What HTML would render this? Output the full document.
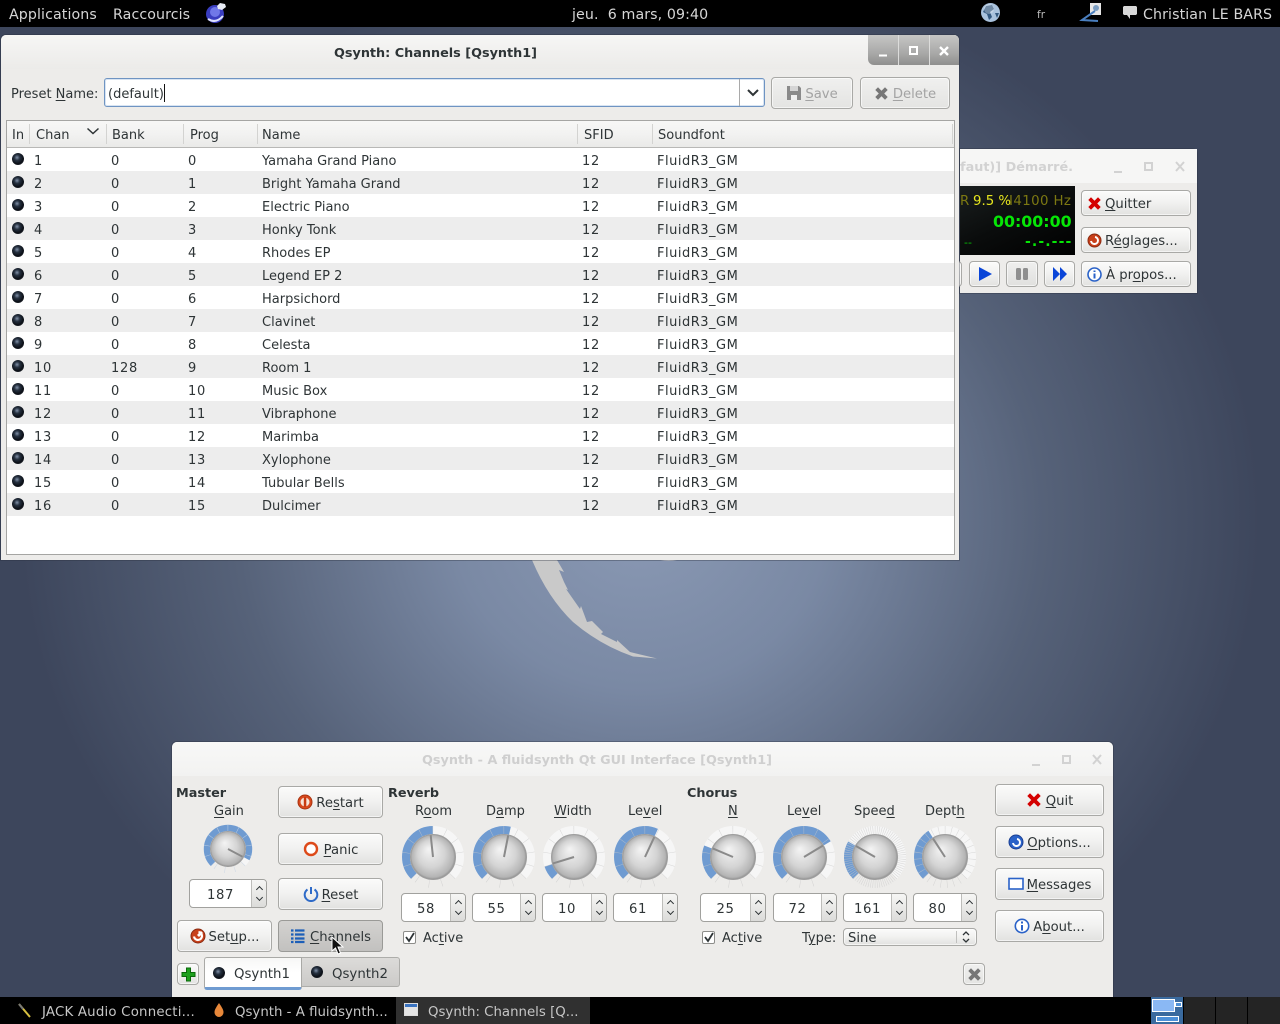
<!DOCTYPE html>
<html lang="fr"><head><meta charset="utf-8"><title>Qsynth</title>
<style>
html,body{margin:0;padding:0}
body{position:relative;width:1280px;height:1024px;overflow:hidden;font-family:"DejaVu Sans",sans-serif;font-size:13px;color:#2e3436;
background:radial-gradient(ellipse 620px 560px at 640px 520px,#8a99b4 0%,#7a89a4 30%,#566279 65%,#3d465c 100%);background-color:#3a4358}
.a,.t,.b,svg.k{position:absolute}
.t{white-space:nowrap;line-height:16px;margin-top:2px}
.bd{font-weight:bold;font-size:12.8px}
.c{transform:translateX(-50%)}
.bar{position:absolute;left:0;width:1280px;background:#000;color:#d6d6d6}
.win{position:absolute;background:#edecea;box-shadow:0 0 0 1px rgba(40,45,60,.35);border-radius:5px 5px 0 0}
.b{box-sizing:border-box;border:1px solid #a9a9a6;border-radius:4px;background:linear-gradient(#fbfbfa,#f2f2f1 45%,#e2e2e0);box-shadow:inset 0 0 0 1px rgba(255,255,255,.6);display:flex;align-items:center;justify-content:center;white-space:nowrap;gap:3px;font-size:13.2px}
.b svg{flex:none}
.b span{position:relative;top:1px}
.dis{color:#a3a3a3;background:linear-gradient(#f0f0ef,#e4e4e2)}
.pr{background:linear-gradient(#d3d2d0,#c2c1bf);border-color:#9a9a97;box-shadow:none}
.sp{position:absolute;box-sizing:border-box;height:29px;border:1px solid #a1a19e;border-radius:4px;background:#fff;text-align:center;line-height:31px;padding-right:15px;letter-spacing:.6px;font-size:13.2px}
.sp i{position:absolute;right:0;top:0;bottom:0;width:14px;border-left:1px solid #bdbdba;background:linear-gradient(#f6f6f5,#dcdcda);border-radius:0 3px 3px 0}
.sp i:before,.sp i:after{content:"";position:absolute;left:5px;width:4px;height:4px;border-left:1.3px solid #2e3436;border-top:1.3px solid #2e3436}
.sp i:before{top:7px;transform:rotate(45deg)}
.sp i:after{bottom:7px;transform:rotate(225deg)}
table{position:absolute;left:7px;top:148px;width:947px;border-collapse:collapse;table-layout:fixed;background:#fff}
td{height:19px;padding:4px 0 0 5px;line-height:19px;white-space:nowrap;overflow:hidden}
td:nth-child(-n+4),td:nth-child(6){letter-spacing:.7px}
td:last-child{letter-spacing:.5px}
tr:nth-child(even){background:#ededed}
.led{display:block;width:12px;height:12px;border-radius:50%;background:radial-gradient(circle at 42% 38%,#8090a8 0%,#25303f 28%,#0b0f16 62%,#40454c 100%);margin:-5px 0 0 0}
.hd{position:absolute;top:124px;height:20px;width:1px;background:#d3d3d1}
.cb{position:absolute;box-sizing:border-box;width:13px;height:13px;border:1px solid #8d8d8a;background:#fff;border-radius:2px}
u{text-underline-offset:2px;text-decoration-thickness:1px}
</style></head><body>
<svg width="0" height="0" style="position:absolute"><defs>
<radialGradient id="kg" cx="50%" cy="50%" r="50%" fx="40%" fy="32%"><stop offset="0" stop-color="#f4f4f4"/><stop offset=".6" stop-color="#d4d4d4"/><stop offset=".92" stop-color="#b4b4b4"/><stop offset="1" stop-color="#8f8f8f"/></radialGradient>
<g id="kb"><circle r="27" fill="none" stroke="#f6f6f6" stroke-width="8" pathLength="360" stroke-dasharray="270 360" transform="rotate(-225)"/></g>
<g id="kc"><circle r="22.6" fill="url(#kg)" stroke="#a0a0a0" stroke-width=".8"/></g>
</defs></svg>

<!-- wallpaper crescent -->
<svg class="a" style="left:0;top:0" width="1280" height="1024"><path fill="#c9c9c9" d="M532 560L557 560L564 572L559 570L564 582L568 590L566 589L580 609L581 606L587 622L592 621L603 632L601 634L617 642L617 640L630 652L657 658.5L633 656.5Q600 645 573 622Q548 598 532 560Z"/><path fill="#d8dbe2" d="M660 560h17q-8 2-17 0z"/></svg>

<!-- top bar -->
<div class="bar" style="top:0;height:27px;font-size:14.2px;letter-spacing:.1px">
<span class="t" style="left:9px;top:5px">Applications</span>
<span class="t" style="left:113px;top:5px">Raccourcis</span>
<span class="t" style="left:572px;top:5px;white-space:pre">jeu.  6 mars, 09:40</span>
<span class="t" style="left:1037px;top:5px;font-size:10.5px;color:#bbb">fr</span>
<span class="t" style="left:1143px;top:5px">Christian LE BARS</span>
<svg class="a" style="left:204px;top:0" width="24" height="24"><circle cx="11" cy="14" r="9" fill="#3a3ec0"/><circle cx="11" cy="12" r="5" fill="#7078e8"/><path d="M4 19q8 5 15-3" stroke="#dfe3ff" stroke-width="2" fill="none"/><path d="M13 6l3-3 5 1 1 3-4 3-4-1z" fill="#e8ecf4"/></svg>
<svg class="a" style="left:979px;top:1px" width="24" height="24"><circle cx="11.5" cy="11.5" r="9.5" fill="#a9c2dd"/><path d="M7 5l6-1 2 4-4 3 2 5-3 3-2-6-4-2z" fill="#33587f"/><path d="M16 12l4 0-2 5z" fill="#33587f"/><circle cx="10" cy="8" r="5" fill="#fff" opacity=".3"/></svg>
<svg class="a" style="left:1078px;top:0" width="24" height="24"><path d="M12 3h11v12H12z" fill="#e6e6e6"/><circle cx="18" cy="8" r="3" fill="#7a9cc0"/><path d="M17 11L4 20l16 1" stroke="#4a7fbf" stroke-width="2" fill="none"/></svg>
<svg class="a" style="left:1122px;top:5px" width="16" height="16"><path d="M2 1h12l1 1v7l-1 1H8v4L5 10H2L1 9V2z" fill="#d8d8d8"/></svg>
</div>

<!-- background small window -->
<div class="win" style="left:960px;top:149px;width:237px;height:144px;border-radius:0 5px 0 0">
<div class="a" style="left:0;top:0;width:237px;height:34px;background:#f6f6f5"></div>
<span class="t bd" style="left:0;top:9px;color:#d2d2d2">faut)] Démarré.</span>
<svg class="a" style="left:150px;top:8px" width="80" height="20" stroke="#d2d2d2" fill="none" stroke-width="2"><path d="M4 15h8"/><rect x="35" y="6" width="7" height="7"/><path d="M66 5l8 9M74 5l-8 9"/></svg>
<div class="a" style="left:0;top:37px;width:115px;height:69px;background:linear-gradient(155deg,#1a1f1f,#0a0c0c 50%,#000)"></div>
<span class="t" style="left:0;top:43px;color:#7c7812;font-size:13.33px">R</span>
<span class="t" style="left:13px;top:43px;color:#e6e61e;font-size:13.33px">9.5 %</span>
<span class="t" style="left:49px;top:43px;color:#7c7812;font-size:13.33px;letter-spacing:.4px">I4100 Hz</span>
<span class="t" style="left:33px;top:63px;color:#06e606;font-size:15.8px;font-weight:bold">00:00:00</span>
<span class="t" style="left:4px;top:84px;color:#06c006;font-size:11px">--</span>
<span class="t" style="left:65px;top:83px;color:#06e606;font-size:14px;font-weight:bold;letter-spacing:1.1px">-.-.---</span>
<div class="b" style="left:-8px;top:112px;width:10px;height:26px"></div>
<div class="b" style="left:9px;top:112px;width:31px;height:26px"><svg width="16" height="16"><path d="M2 1l13 7-13 7z" fill="#0a45d8"/></svg></div>
<div class="b" style="left:46px;top:112px;width:32px;height:26px;background:linear-gradient(#efefee,#e0e0de)"><svg width="14" height="14"><rect x="1" y="1" width="5" height="12" rx="1.5" fill="#8f8f8f"/><rect x="8" y="1" width="5" height="12" rx="1.5" fill="#8f8f8f"/></svg></div>
<div class="b" style="left:84px;top:112px;width:31px;height:26px"><svg width="16" height="14"><path d="M1 0l7 7-7 7zM8 0l7 7-7 7z" fill="#0a45d8"/></svg></div>
<div class="b" style="left:121px;top:41px;width:110px;height:26px;justify-content:flex-start;padding-left:5px"><svg width="15" height="15"><path d="M2 4l2-2 3.5 3.5L11 2l2 2-3.5 3.5L13 11l-2 2-3.5-3.5L4 13l-2-2 3.5-3.5z" fill="#d40000" stroke="#d40000"/></svg><span><u>Q</u>uitter</span></div>
<div class="b" style="left:121px;top:78px;width:110px;height:26px;justify-content:flex-start;padding-left:5px"><svg width="15" height="15"><circle cx="7.5" cy="7.5" r="6.5" fill="#c8401a" stroke="#8a2a10"/><path d="M4 8a3.5 3.5 0 1 0 4-4" stroke="#fff" stroke-width="2" fill="none"/></svg><span>R<u>é</u>glages...</span></div>
<div class="b" style="left:121px;top:112px;width:110px;height:26px;justify-content:flex-start;padding-left:5px"><svg width="15" height="15"><circle cx="7.5" cy="7.5" r="6.5" fill="#fff" stroke="#2a62c8" stroke-width="1.6"/><path d="M7.5 3.5v1.5M7.5 6.5v5" stroke="#2a62c8" stroke-width="2"/></svg><span style="margin-left:1px">À pr<u>o</u>pos...</span></div>
</div>

<!-- channels window -->
<div class="win" style="left:1px;top:35px;width:958px;height:525px">
<div class="a" style="left:0;top:0;width:958px;height:34px;border-radius:5px 5px 0 0;background:linear-gradient(#f6f6f5,#ecebe9)"></div>
<div class="a" style="left:867px;top:0;width:91px;height:30px;border-radius:0 5px 0 6px;background:linear-gradient(#c6c6c5,#a9a9a8 60%,#8f8f8e)"></div>
<div class="a" style="left:897px;top:0;width:1px;height:30px;background:#dcdcdb"></div>
<div class="a" style="left:928px;top:0;width:1px;height:30px;background:#dcdcdb"></div>
<svg class="a" style="left:867px;top:0" width="91" height="30" stroke="#fff" fill="none" stroke-width="2"><path d="M11 20.5h8"/><rect x="42" y="12" width="7" height="7"/><path d="M72 12l8 8M80 12l-8 8" stroke-width="2.4"/></svg>
</div>
<span class="t bd" style="left:435.5px;top:44px"><span class="c" style="display:block">Qsynth: Channels [Qsynth1]</span></span>
<span class="t" style="left:11px;top:85px">Preset <u>N</u>ame:</span>
<div class="a" style="left:104px;top:78px;width:661px;height:29px;box-sizing:border-box;border:1px solid #6f94c2;border-radius:3px;background:#fff;box-shadow:inset 0 0 0 1px #d8e4f2"></div>
<span class="t" style="left:108px;top:85px">(default)</span>
<div class="a" style="left:164px;top:84px;width:1px;height:18px;background:#111"></div>
<div class="a" style="left:739px;top:79px;width:1px;height:27px;background:#a9a9a9"></div>
<svg class="a" style="left:746px;top:88px" width="14" height="10"><path d="M2 2l5 5 5-5" stroke="#2e3436" stroke-width="2" fill="none"/></svg>
<div class="b dis" style="left:771px;top:77px;width:82px;height:32px"><svg width="16" height="16"><path d="M1 1h12l2 2v12H1z" fill="#8a8a8a"/><rect x="4" y="1" width="8" height="5" fill="#d5d5d5"/><rect x="5" y="10" width="6" height="5" fill="#f0f0f0"/></svg><span><u>S</u>ave</span></div>
<div class="b dis" style="left:860px;top:77px;width:90px;height:32px"><svg width="15" height="15"><path d="M2 4l2-2 3.5 3.5L11 2l2 2-3.5 3.5L13 11l-2 2-3.5-3.5L4 13l-2-2 3.5-3.5z" fill="#777" stroke="#777"/></svg><span style="margin-left:1px"><u>D</u>elete</span></div>

<!-- table -->
<div class="a" style="left:6px;top:120px;width:947px;height:433px;border:1px solid #a5a5a3;background:#fff"></div>
<div class="a" style="left:7px;top:121px;width:947px;height:27px;background:linear-gradient(#f7f7f6,#f2f2f1 50%,#e9e9e7);border-bottom:0"></div>
<div class="a" style="left:7px;top:147px;width:947px;height:1px;background:#b8b8b6"></div>
<i class="hd" style="left:29px"></i><i class="hd" style="left:106px"></i><i class="hd" style="left:183px"></i><i class="hd" style="left:257px"></i><i class="hd" style="left:577px"></i><i class="hd" style="left:652px"></i><i class="hd" style="left:952px"></i>
<span class="t" style="left:12px;top:126px">In</span><span class="t" style="left:36px;top:126px">Chan</span><span class="t" style="left:112px;top:126px">Bank</span><span class="t" style="left:190px;top:126px">Prog</span><span class="t" style="left:262px;top:126px">Name</span><span class="t" style="left:584px;top:126px">SFID</span><span class="t" style="left:658px;top:126px">Soundfont</span>
<svg class="a" style="left:86px;top:127px" width="14" height="9"><path d="M1.5 1.5l5.5 5 5.5-5" stroke="#2e3436" stroke-width="1.5" fill="none"/></svg>
<table><colgroup><col style="width:22px"><col style="width:77px"><col style="width:77px"><col style="width:74px"><col style="width:320px"><col style="width:75px"><col></colgroup>
<tr><td><b class="led"></b></td><td>1</td><td>0</td><td>0</td><td>Yamaha Grand Piano</td><td>12</td><td>FluidR3_GM</td></tr>
<tr><td><b class="led"></b></td><td>2</td><td>0</td><td>1</td><td>Bright Yamaha Grand</td><td>12</td><td>FluidR3_GM</td></tr>
<tr><td><b class="led"></b></td><td>3</td><td>0</td><td>2</td><td>Electric Piano</td><td>12</td><td>FluidR3_GM</td></tr>
<tr><td><b class="led"></b></td><td>4</td><td>0</td><td>3</td><td>Honky Tonk</td><td>12</td><td>FluidR3_GM</td></tr>
<tr><td><b class="led"></b></td><td>5</td><td>0</td><td>4</td><td>Rhodes EP</td><td>12</td><td>FluidR3_GM</td></tr>
<tr><td><b class="led"></b></td><td>6</td><td>0</td><td>5</td><td>Legend EP 2</td><td>12</td><td>FluidR3_GM</td></tr>
<tr><td><b class="led"></b></td><td>7</td><td>0</td><td>6</td><td>Harpsichord</td><td>12</td><td>FluidR3_GM</td></tr>
<tr><td><b class="led"></b></td><td>8</td><td>0</td><td>7</td><td>Clavinet</td><td>12</td><td>FluidR3_GM</td></tr>
<tr><td><b class="led"></b></td><td>9</td><td>0</td><td>8</td><td>Celesta</td><td>12</td><td>FluidR3_GM</td></tr>
<tr><td><b class="led"></b></td><td>10</td><td>128</td><td>9</td><td>Room 1</td><td>12</td><td>FluidR3_GM</td></tr>
<tr><td><b class="led"></b></td><td>11</td><td>0</td><td>10</td><td>Music Box</td><td>12</td><td>FluidR3_GM</td></tr>
<tr><td><b class="led"></b></td><td>12</td><td>0</td><td>11</td><td>Vibraphone</td><td>12</td><td>FluidR3_GM</td></tr>
<tr><td><b class="led"></b></td><td>13</td><td>0</td><td>12</td><td>Marimba</td><td>12</td><td>FluidR3_GM</td></tr>
<tr><td><b class="led"></b></td><td>14</td><td>0</td><td>13</td><td>Xylophone</td><td>12</td><td>FluidR3_GM</td></tr>
<tr><td><b class="led"></b></td><td>15</td><td>0</td><td>14</td><td>Tubular Bells</td><td>12</td><td>FluidR3_GM</td></tr>
<tr><td><b class="led"></b></td><td>16</td><td>0</td><td>15</td><td>Dulcimer</td><td>12</td><td>FluidR3_GM</td></tr>
</table>

<!-- main window -->
<div class="win" style="left:172px;top:742px;width:941px;height:255px">
<div class="a" style="left:0;top:0;width:941px;height:34px;border-radius:5px 5px 0 0;background:linear-gradient(#f8f8f7,#f2f2f1)"></div>
<span class="t bd" style="left:425px;top:9px;color:#cfcfcf"><span class="c" style="display:block">Qsynth - A fluidsynth Qt GUI Interface [Qsynth1]</span></span>
<svg class="a" style="left:855px;top:8px" width="80" height="20" stroke="#d2d2d2" fill="none" stroke-width="2"><path d="M5 15h8"/><rect x="36" y="6" width="7" height="7"/><path d="M66 5l8 9M74 5l-8 9"/></svg>
</div>

<span class="t bd" style="left:176px;top:784px">Master</span>
<span class="t bd" style="left:388px;top:784px">Reverb</span>
<span class="t bd" style="left:687px;top:784px">Chorus</span>

<span class="t" style="left:214px;top:802px"><u>G</u>ain</span>
<span class="t" style="left:415px;top:802px">R<u>o</u>om</span>
<span class="t" style="left:486px;top:802px">D<u>a</u>mp</span>
<span class="t" style="left:554px;top:802px"><u>W</u>idth</span>
<span class="t" style="left:628px;top:802px">Le<u>v</u>el</span>
<span class="t" style="left:728px;top:802px"><u>N</u></span>
<span class="t" style="left:787px;top:802px">Le<u>v</u>el</span>
<span class="t" style="left:854px;top:802px">Spee<u>d</u></span>
<span class="t" style="left:925px;top:802px">Dept<u>h</u></span>

<!-- knobs -->
<svg class="k" style="left:203px;top:824px" width="50" height="50" viewBox="-32 -32 64 64"><use href="#kb"/><circle r="27" fill="none" stroke="#6f9bd1" stroke-width="8" pathLength="360" stroke-dasharray="253 360" transform="rotate(-225)"/><circle r="27" fill="none" stroke="#c8d4e4" stroke-opacity=".8" stroke-width="8" pathLength="360" stroke-dasharray="1.5 25.5" stroke-dashoffset=".7" transform="rotate(-225)"/><use href="#kc"/><line x1="0" y1="0" x2="0" y2="-21" stroke="#8a8a8a" stroke-width="2.4" transform="rotate(118)"/></svg>
<svg class="k" style="left:401px;top:825px" width="64" height="64" viewBox="-32 -32 64 64"><use href="#kb"/><circle r="27" fill="none" stroke="#6f9bd1" stroke-width="8" pathLength="360" stroke-dasharray="135 360" transform="rotate(-225)"/><circle r="27" fill="none" stroke="#c9c9c9" stroke-opacity=".75" stroke-width="8" pathLength="360" stroke-dasharray="1 26" stroke-dashoffset=".5" transform="rotate(-225)"/><use href="#kc"/><line x1="0" y1="0" x2="0" y2="-22" stroke="#8a8a8a" stroke-width="2" transform="rotate(-6)"/></svg>
<svg class="k" style="left:472px;top:825px" width="64" height="64" viewBox="-32 -32 64 64"><use href="#kb"/><circle r="27" fill="none" stroke="#6f9bd1" stroke-width="8" pathLength="360" stroke-dasharray="148 360" transform="rotate(-225)"/><circle r="27" fill="none" stroke="#c9c9c9" stroke-opacity=".75" stroke-width="8" pathLength="360" stroke-dasharray="1 26" stroke-dashoffset=".5" transform="rotate(-225)"/><use href="#kc"/><line x1="0" y1="0" x2="0" y2="-22" stroke="#8a8a8a" stroke-width="2" transform="rotate(11)"/></svg>
<svg class="k" style="left:542px;top:825px" width="64" height="64" viewBox="-32 -32 64 64"><use href="#kb"/><circle r="27" fill="none" stroke="#6f9bd1" stroke-width="8" pathLength="360" stroke-dasharray="27 360" transform="rotate(-225)"/><circle r="27" fill="none" stroke="#c9c9c9" stroke-opacity=".75" stroke-width="8" pathLength="360" stroke-dasharray="1 26" stroke-dashoffset=".5" transform="rotate(-225)"/><use href="#kc"/><line x1="0" y1="0" x2="0" y2="-22" stroke="#8a8a8a" stroke-width="2" transform="rotate(-107)"/></svg>
<svg class="k" style="left:613px;top:825px" width="64" height="64" viewBox="-32 -32 64 64"><use href="#kb"/><circle r="27" fill="none" stroke="#6f9bd1" stroke-width="8" pathLength="360" stroke-dasharray="160 360" transform="rotate(-225)"/><circle r="27" fill="none" stroke="#c9c9c9" stroke-opacity=".75" stroke-width="8" pathLength="360" stroke-dasharray="1 26" stroke-dashoffset=".5" transform="rotate(-225)"/><use href="#kc"/><line x1="0" y1="0" x2="0" y2="-22" stroke="#8a8a8a" stroke-width="2" transform="rotate(25)"/></svg>
<svg class="k" style="left:701px;top:825px" width="64" height="64" viewBox="-32 -32 64 64"><use href="#kb"/><circle r="27" fill="none" stroke="#6f9bd1" stroke-width="8" pathLength="360" stroke-dasharray="67 360" transform="rotate(-225)"/><circle r="27" fill="none" stroke="#c9c9c9" stroke-opacity=".75" stroke-width="8" pathLength="360" stroke-dasharray="1 26" stroke-dashoffset=".5" transform="rotate(-225)"/><use href="#kc"/><line x1="0" y1="0" x2="0" y2="-22" stroke="#8a8a8a" stroke-width="2" transform="rotate(-67)"/></svg>
<svg class="k" style="left:772px;top:825px" width="64" height="64" viewBox="-32 -32 64 64"><use href="#kb"/><circle r="27" fill="none" stroke="#6f9bd1" stroke-width="8" pathLength="360" stroke-dasharray="195 360" transform="rotate(-225)"/><circle r="27" fill="none" stroke="#c9c9c9" stroke-opacity=".75" stroke-width="8" pathLength="360" stroke-dasharray="1 26" stroke-dashoffset=".5" transform="rotate(-225)"/><use href="#kc"/><line x1="0" y1="0" x2="0" y2="-22" stroke="#8a8a8a" stroke-width="2" transform="rotate(59)"/></svg>
<svg class="k" style="left:843px;top:825px" width="64" height="64" viewBox="-32 -32 64 64"><use href="#kb"/><circle r="27" fill="none" stroke="#6f9bd1" stroke-width="8" pathLength="360" stroke-dasharray="75 360" transform="rotate(-225)"/><circle r="27" fill="none" stroke="#c9c9c9" stroke-opacity=".75" stroke-width="8" pathLength="360" stroke-dasharray="1 3.5" transform="rotate(-225)"/><use href="#kc"/><line x1="0" y1="0" x2="0" y2="-22" stroke="#8a8a8a" stroke-width="2" transform="rotate(-60)"/></svg>
<svg class="k" style="left:913px;top:825px" width="64" height="64" viewBox="-32 -32 64 64"><use href="#kb"/><circle r="27" fill="none" stroke="#6f9bd1" stroke-width="8" pathLength="360" stroke-dasharray="103 360" transform="rotate(-225)"/><circle r="27" fill="none" stroke="#c9c9c9" stroke-opacity=".75" stroke-width="8" pathLength="360" stroke-dasharray="1 12.5" transform="rotate(-225)"/><use href="#kc"/><line x1="0" y1="0" x2="0" y2="-22" stroke="#8a8a8a" stroke-width="2" transform="rotate(-33)"/></svg>

<!-- spin boxes -->
<div class="sp" style="left:189px;top:879px;width:78px">187<i></i></div>
<div class="sp" style="left:401px;top:893px;width:65px">58<i></i></div>
<div class="sp" style="left:472px;top:893px;width:64px">55<i></i></div>
<div class="sp" style="left:542px;top:893px;width:65px">10<i></i></div>
<div class="sp" style="left:613px;top:893px;width:65px">61<i></i></div>
<div class="sp" style="left:700px;top:893px;width:66px">25<i></i></div>
<div class="sp" style="left:773px;top:893px;width:64px">72<i></i></div>
<div class="sp" style="left:843px;top:893px;width:64px">161<i></i></div>
<div class="sp" style="left:913px;top:893px;width:64px">80<i></i></div>

<!-- left buttons -->
<div class="b" style="left:278px;top:786px;width:105px;height:32px"><svg width="16" height="16"><circle cx="8" cy="8" r="7" fill="#d8491e" stroke="#a8330f"/><circle cx="8" cy="8" r="4.5" fill="#f6e4d8"/><rect x="6.8" y="3" width="2.5" height="10" fill="#c83a10"/></svg><span>Re<u>s</u>tart</span></div>
<div class="b" style="left:278px;top:833px;width:105px;height:32px"><svg width="16" height="16" style="margin-right:2px"><circle cx="8" cy="8" r="6" fill="#fff" stroke="#dd4a1a" stroke-width="2.4"/></svg><span><u>P</u>anic</span></div>
<div class="b" style="left:278px;top:878px;width:105px;height:32px"><svg width="16" height="16"><path d="M4.5 3.5a6.3 6.3 0 1 0 7 0" fill="none" stroke="#2f6bc8" stroke-width="2"/><path d="M8 1v7" stroke="#2f6bc8" stroke-width="2"/></svg><span><u>R</u>eset</span></div>
<div class="b" style="left:177px;top:920px;width:95px;height:32px"><svg width="16" height="16"><circle cx="8" cy="8" r="7" fill="#c8401a" stroke="#8a2a10"/><path d="M4 8.5a4 4 0 1 0 4.5-4.5" stroke="#fff" stroke-width="2.2" fill="none"/><path d="M7 7l4-4 2 2-4 4z" fill="#fff"/></svg><span>Set<u>u</u>p...</span></div>
<div class="b pr" style="left:278px;top:920px;width:105px;height:32px"><svg width="15" height="15"><path d="M1 2h2.5M5 2h9.5M1 6h2.5M5 6h9.5M1 10h2.5M5 10h9.5M1 13.5h2.5M5 13.5h9.5" stroke="#1d5fb8" stroke-width="2.2" transform="translate(0 -.5)"/></svg><span style="margin-left:2px"><u>C</u>hannels</span></div>

<div class="cb" style="left:403px;top:931px"></div><svg class="a" style="left:404px;top:931px" width="12" height="12"><path d="M2 6l3 4 5-8" stroke="#2e3436" stroke-width="1.8" fill="none"/></svg>
<span class="t" style="left:423px;top:929px">Ac<u>t</u>ive</span>
<div class="cb" style="left:702px;top:931px"></div><svg class="a" style="left:703px;top:931px" width="12" height="12"><path d="M2 6l3 4 5-8" stroke="#2e3436" stroke-width="1.8" fill="none"/></svg>
<span class="t" style="left:722px;top:929px">Ac<u>t</u>ive</span>
<span class="t" style="left:802px;top:929px">T<u>y</u>pe:</span>
<div class="b" style="left:843px;top:928px;width:134px;height:18px;justify-content:flex-start;padding-left:4px"><span>Sine</span></div>
<div class="a" style="left:956px;top:931px;width:1px;height:12px;background:#c0c0be"></div>
<svg class="a" style="left:961px;top:930px" width="10" height="14"><path d="M2 5l3-3 3 3M2 9l3 3 3-3" stroke="#2e3436" stroke-width="1.3" fill="none"/></svg>

<!-- right buttons -->
<div class="b" style="left:995px;top:784px;width:109px;height:32px"><svg width="16" height="16"><path d="M2 4l2-2 4 4 4-4 2 2-4 4 4 4-2 2-4-4-4 4-2-2 4-4z" fill="#d40000" stroke="#d40000"/></svg><span style="margin-left:1px"><u>Q</u>uit</span></div>
<div class="b" style="left:995px;top:826px;width:109px;height:32px"><svg width="16" height="16"><circle cx="8" cy="8" r="7" fill="#2a62c8" stroke="#1a3f92"/><path d="M5 9a3.5 3.5 0 1 0 4-4" stroke="#fff" stroke-width="2" fill="none"/></svg><span><u>O</u>ptions...</span></div>
<div class="b" style="left:995px;top:868px;width:109px;height:32px"><svg width="16" height="14"><rect x="1" y="1.5" width="14" height="10.5" fill="#fff" stroke="#2a62c8" stroke-width="1.6"/></svg><span><u>M</u>essages</span></div>
<div class="b" style="left:995px;top:910px;width:109px;height:32px"><svg width="16" height="16"><circle cx="8" cy="8" r="6.7" fill="#fff" stroke="#2a62c8" stroke-width="1.6"/><path d="M8 3.5v2M8 7v5.5" stroke="#2a62c8" stroke-width="2"/></svg><span>A<u>b</u>out...</span></div>

<!-- tabs -->
<div class="b" style="left:177px;top:963px;width:22px;height:22px"><svg width="15" height="15"><path d="M5.5 1h4v4.5H14v4H9.5V14h-4V9.5H1v-4h4.5z" fill="#1ea01e" stroke="#0a6a0a"/></svg></div>
<div class="a" style="left:301px;top:957px;width:99px;height:30px;box-sizing:border-box;border:1px solid #adadaa;border-left:0;background:linear-gradient(#dcdbd9,#cbcac8);border-radius:0 3px 3px 0"></div>
<div class="a" style="left:204px;top:957px;width:98px;height:33px;box-sizing:border-box;border:1px solid #a9a9a6;background:linear-gradient(#f7f7f6,#fff 50%,#fff);border-bottom:3px solid #6f9bd1;border-radius:3px 0 3px 3px"></div>
<b class="led a" style="left:213px;top:967px;margin:0"></b><span class="t" style="left:234px;top:965px;font-size:13.33px">Qsynth1</span>
<b class="led a" style="left:311px;top:966px;margin:0"></b><span class="t" style="left:332px;top:965px;font-size:13.33px">Qsynth2</span>
<div class="b dis" style="left:963px;top:963px;width:22px;height:22px"><svg width="15" height="15"><path d="M2 4l2-2 3.5 3.5L11 2l2 2-3.5 3.5L13 11l-2 2-3.5-3.5L4 13l-2-2 3.5-3.5z" fill="#777" stroke="#777"/></svg></div>

<!-- cursor -->
<svg class="a" style="left:330px;top:936px" width="14" height="20"><path d="M2 1v14l3.5-3 2.5 6 2.5-1-2.5-6h5z" fill="#111" stroke="#fff"/></svg>

<!-- task bar -->
<div class="bar" style="top:997px;height:27px;color:#c6c6c6;font-size:13.33px">
<div class="a" style="left:396px;top:0;width:194px;height:27px;background:#303030"></div>
<svg class="a" style="left:16px;top:5px" width="18" height="18"><path d="M3 2l11 13" stroke="#d8c040" stroke-width="2"/><path d="M3 2l4 5" stroke="#777" stroke-width="2"/></svg>
<span class="t" style="left:42px;top:6px;letter-spacing:.2px">JACK Audio Connecti...</span>
<svg class="a" style="left:212px;top:5px" width="14" height="16"><path d="M7 1q5 7 4.5 9.5a4.5 4.5 0 0 1-9 0Q2 8 7 1z" fill="#e8883a"/></svg>
<span class="t" style="left:235px;top:6px">Qsynth - A fluidsynth...</span>
<svg class="a" style="left:404px;top:6px" width="15" height="14"><rect x=".5" y=".5" width="13" height="12" fill="#e4e4e4" stroke="#ddd"/><rect x="1" y="1" width="12" height="3" fill="#3a73c0"/></svg>
<span class="t" style="left:428px;top:6px">Qsynth: Channels [Q...</span>
<div class="a" style="left:1151px;top:0;width:32px;height:27px;background:#3a6a9e"></div>
<div class="a" style="left:1184px;top:0;width:31px;height:27px;background:#242424"></div>
<div class="a" style="left:1216px;top:0;width:31px;height:27px;background:#242424"></div>
<div class="a" style="left:1248px;top:0;width:32px;height:27px;background:#242424"></div>
<div class="a" style="left:1152px;top:2px;width:21px;height:11px;background:#8ab8f4;border:1px solid #fff"></div>
<div class="a" style="left:1175px;top:5px;width:5px;height:3px;background:#4d90d8;border:1px solid #fff"></div>
<div class="a" style="left:1156px;top:19px;width:21px;height:4px;background:#4d90d8;border:1px solid #fff"></div>
</div>
</body></html>
